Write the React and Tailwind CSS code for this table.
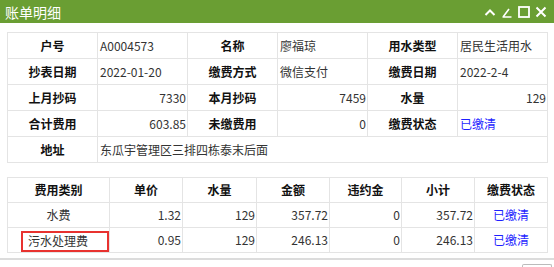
import React from "react";

const font = { fontFamily: '"Noto Sans CJK SC", "Liberation Sans", sans-serif' };

function Paid() {
  return <span className="text-[#1f1fff]">已缴清</span>;
}

export default function App() {
  const th = "border border-[#e4e4e4] font-bold text-center text-[#111]";
  const td = "border border-[#e4e4e4] text-[#333] px-[2px]";
  const num = "border border-[#e4e4e4] text-[#333] text-right pr-[1px]";

  const fees = [
    { name: "水费", price: "1.32", qty: "129", amt: "357.72", late: "0", sub: "357.72" },
    { name: "污水处理费", price: "0.95", qty: "129", amt: "246.13", late: "0", sub: "246.13", mark: true },
  ];

  return (
    <div className="w-[554px] h-[267px] bg-white overflow-hidden text-[12px]" style={font}>
      {/* title bar */}
      <div className="h-[23px] bg-[#6a9e33] flex items-center justify-between pl-[5px] pr-[7px]">
        <span className="text-white text-[14px] leading-none">账单明细</span>
        <div className="flex items-center gap-[5px]">
          <svg width="12" height="12" viewBox="0 0 12 12" fill="none" stroke="white" strokeWidth="2">
            <path d="M1.5 9 L6 4.5 L10.5 9" />
          </svg>
          <svg width="12" height="12" viewBox="0 0 12 12" fill="none" stroke="white" strokeWidth="1.6">
            <path d="M1.5 11 H10.5 M2 11 L8 3" />
          </svg>
          <svg width="12" height="12" viewBox="0 0 12 12" fill="none" stroke="white" strokeWidth="1.8">
            <rect x="1" y="1" width="10" height="10" />
          </svg>
          <svg width="12" height="12" viewBox="0 0 12 12" fill="none" stroke="white" strokeWidth="2">
            <path d="M1.5 1.5 L10.5 10.5 M10.5 1.5 L1.5 10.5" />
          </svg>
        </div>
      </div>

      {/* account info */}
      <div className="pl-[7px] pt-[9px]">
        <table className="border-collapse table-fixed w-[540px] leading-none">
          <colgroup>
            <col className="w-[90px]" />
            <col className="w-[90px]" />
            <col className="w-[90px]" />
            <col className="w-[90px]" />
            <col className="w-[90px]" />
            <col className="w-[90px]" />
          </colgroup>
          <tbody>
            <tr className="h-[26px]">
              <td className={th}>户号</td>
              <td className={td}>A0004573</td>
              <td className={th}>名称</td>
              <td className={td}>廖福琼</td>
              <td className={th}>用水类型</td>
              <td className={td}>居民生活用水</td>
            </tr>
            <tr className="h-[26px]">
              <td className={th}>抄表日期</td>
              <td className={td}>2022-01-20</td>
              <td className={th}>缴费方式</td>
              <td className={td}>微信支付</td>
              <td className={th}>缴费日期</td>
              <td className={td}>2022-2-4</td>
            </tr>
            <tr className="h-[26px]">
              <td className={th}>上月抄码</td>
              <td className={num}>7330</td>
              <td className={th}>本月抄码</td>
              <td className={num}>7459</td>
              <td className={th}>水量</td>
              <td className={num}>129</td>
            </tr>
            <tr className="h-[26px]">
              <td className={th}>合计费用</td>
              <td className={num}>603.85</td>
              <td className={th}>未缴费用</td>
              <td className={num}>0</td>
              <td className={th}>缴费状态</td>
              <td className={td}>
                <Paid />
              </td>
            </tr>
            <tr className="h-[26px]">
              <td className={th}>地址</td>
              <td className={td} colSpan={5}>
                东瓜宇管理区三排四栋泰末后面
              </td>
            </tr>
          </tbody>
        </table>
      </div>

      {/* fee detail */}
      <div className="pl-[7px] pt-[14px]">
        <table className="border-collapse table-fixed w-[540px] leading-none">
          <colgroup>
            <col className="w-[102px]" />
            <col className="w-[73px]" />
            <col className="w-[74px]" />
            <col className="w-[73px]" />
            <col className="w-[72px]" />
            <col className="w-[73px]" />
            <col className="w-[73px]" />
          </colgroup>
          <tbody>
            <tr className="h-[25px]">
              <td className={th}>费用类别</td>
              <td className={th}>单价</td>
              <td className={th}>水量</td>
              <td className={th}>金额</td>
              <td className={th}>违约金</td>
              <td className={th}>小计</td>
              <td className={th}>缴费状态</td>
            </tr>
            {fees.map((f) => (
              <tr key={f.name} className="h-[25px]">
                <td className="border border-[#e4e4e4] text-[#333] p-0">
                  {f.mark ? (
                    <div className="ml-[13px] h-[21px] mt-[2px] border-2 border-[#e8322f] flex items-center pl-[5px]">
                      {f.name}
                    </div>
                  ) : (
                    <div className="text-center">{f.name}</div>
                  )}
                </td>
                <td className={num}>{f.price}</td>
                <td className={num}>{f.qty}</td>
                <td className={num}>{f.amt}</td>
                <td className={num}>{f.late}</td>
                <td className={num}>{f.sub}</td>
                <td className="border border-[#e4e4e4] text-center">
                  <Paid />
                </td>
              </tr>
            ))}
          </tbody>
        </table>
      </div>

      {/* footer */}
      <div className="mt-[5px] border-t-2 border-[#dcdcdc] flex justify-end pr-[2px] pt-[4px]">
        <div className="w-[30px] h-[10px] border border-[#bbb] rounded-t-[2px] border-b-0" />
      </div>
    </div>
  );
}
